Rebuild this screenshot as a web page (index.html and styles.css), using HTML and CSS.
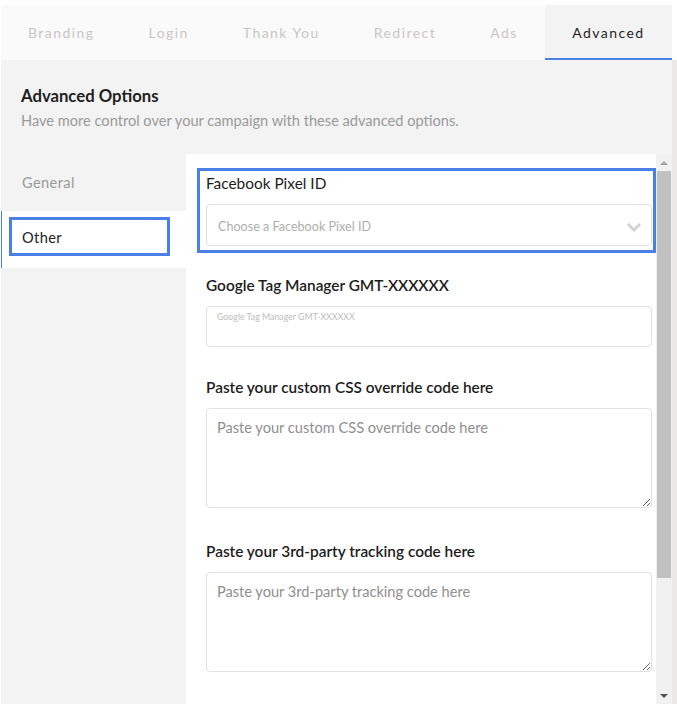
FILE: index.html
```html
<!DOCTYPE html>
<html>
<head>
<meta charset="utf-8">
<link rel="stylesheet" href="styles.css">
</head>
<body>
<div class="app">
  <nav class="tabs">
    <span class="tab">Branding</span>
    <span class="tab">Login</span>
    <span class="tab">Thank You</span>
    <span class="tab">Redirect</span>
    <span class="tab">Ads</span>
    <span class="tab tab-active">Advanced</span>
  </nav>
  <div class="main">
    <header class="intro">
      <h2 class="intro-title">Advanced Options</h2>
      <p class="intro-sub">Have more control over your campaign with these advanced options.</p>
    </header>
    <div class="body">
      <aside class="side">
        <div class="side-item">General</div>
        <div class="side-item side-active"><span class="side-ring">Other</span></div>
      </aside>
      <section class="panel">
        <div class="form">
          <div class="group group-focus">
            <label class="label label-light">Facebook Pixel ID</label>
            <div class="select">
              <span class="select-ph">Choose a Facebook Pixel ID</span>
              <svg class="chev" width="16" height="10" viewBox="0 0 16 10"><polyline points="2,2 8,8 14,2" fill="none" stroke="#d2d2d2" stroke-width="3"/></svg>
            </div>
          </div>
          <div class="group">
            <label class="label">Google Tag Manager GMT-XXXXXX</label>
            <div class="input"><span class="tiny-ph">Google Tag Manager GMT-XXXXXX</span></div>
          </div>
          <div class="group group-area">
            <label class="label">Paste your custom CSS override code here</label>
            <textarea class="area" placeholder="Paste your custom CSS override code here"></textarea>
          </div>
          <div class="group group-area">
            <label class="label">Paste your 3rd-party tracking code here</label>
            <textarea class="area" placeholder="Paste your 3rd-party tracking code here"></textarea>
          </div>
        </div>
        <div class="scrollbar">
          <div class="sb-arrow sb-up"></div>
          <div class="sb-track"><div class="sb-thumb"></div></div>
          <div class="sb-arrow sb-down"></div>
        </div>
      </section>
    </div>
  </div>
</div>
</body>
</html>
```

FILE: styles.css
```css
* { box-sizing: border-box; }
html, body { height: 100%; }
body {
  margin: 5px 0 0 1px;
  background: #ffffff;
  font-family: Lato, "Noto Sans", sans-serif;
  color: #222;
  overflow: hidden;
}
.app { width: 676px; }
.tabs {
  display: flex;
  width: 671px;
  height: 55px;
  background: #fafafa;
}
.tab {
  display: flex;
  align-items: center;
  padding: 0 27px;
  font-size: 14px;
  letter-spacing: 1.45px;
  color: #c9c6c6;
  border-bottom: 1px solid transparent;
}
.tab-active {
  flex: 1;
  justify-content: center;
  background: #f3f3f3;
  color: #1f1f1f;
  border-bottom: 2px solid #4a7fe8;
  padding-top: 1px;
}
.main {
  background: #f3f3f3;
  border-right: 5px solid #ece8e6;
  width: 676px;
}
.intro { padding: 26px 20px 24px; }
.intro-title {
  margin: 0;
  font-size: 16.7px;
  line-height: 20px;
  font-weight: 700;
  color: #1e1e1e;
}
.intro-sub {
  margin: 6px 0 0;
  font-size: 14.6px;
  line-height: 18px;
  color: #9a9a9a;
}
.body { display: flex; height: 550px; }
.side { width: 185px; }
.side-item {
  height: 57px;
  display: flex;
  align-items: center;
  padding-left: 21px;
  font-size: 14.6px;
  color: #999;
  letter-spacing: 0.4px;
}
.side-active {
  background: #fff;
  border-left: 1px solid #4a7fe8;
  padding: 6px 16px 12px 7px;
  align-items: stretch;
  color: #222;
}
.side-ring {
  flex: 1;
  display: flex;
  align-items: center;
  border: 3px solid #4a7fe8;
  padding: 2px 0 0 10px;
}
.panel {
  width: 486px;
  background: #fff;
  display: flex;
  overflow: hidden;
}
.form {
  flex: 1;
  padding: 14px 4px 0 20px;
}
.group { margin-bottom: 30px; }
.group-area { padding-bottom: 3px; }
.group-focus {
  margin: 0 -4px 22px -9px;
  border: 3px solid #4a7fe8;
  padding: 2px 1px 4px 6px;
}
.label {
  display: block;
  font-size: 15.4px;
  line-height: 20px;
  margin-bottom: 11px;
  font-weight: 600;
  color: #1c1c1c;
}
.label-light { font-weight: 400; }
.select {
  height: 42px;
  border: 1px solid #e1e1e1;
  border-radius: 4px;
  display: flex;
  align-items: center;
  justify-content: space-between;
  padding: 3px 9px 0 11px;
}
.select-ph { font-size: 12.6px; color: #aeaeae; }
.chev { display: block; }
.input {
  height: 41px;
  border: 1px solid #e1e1e1;
  border-radius: 4px;
  padding: 4px 10px;
}
.tiny-ph { font-size: 8.8px; color: #bdbdbd; display: block; line-height: 11px; }
.area {
  display: block;
  width: 100%;
  height: 100px;
  border: 1px solid #e1e1e1;
  border-radius: 4px;
  padding: 10px 10px;
  font-family: Lato, "Noto Sans", sans-serif;
  font-size: 14.6px;
  resize: vertical;
  outline: none;
}
.area::placeholder { color: #8f8f8f; }
.scrollbar {
  width: 16px;
  background: #f1f1f1;
  display: flex;
  flex-direction: column;
}
.sb-arrow {
  height: 17px;
  display: flex;
  align-items: center;
  justify-content: center;
}
.sb-up::before {
  content: "";
  border-left: 4px solid transparent;
  border-right: 4px solid transparent;
  border-bottom: 4px solid #a3a3a3;
}
.sb-down::before {
  content: "";
  border-left: 4px solid transparent;
  border-right: 4px solid transparent;
  border-top: 4px solid #505050;
}
.sb-track { flex: 1; padding: 0 1px; }
.sb-thumb { height: 407px; background: #c1c1c1; }
```
